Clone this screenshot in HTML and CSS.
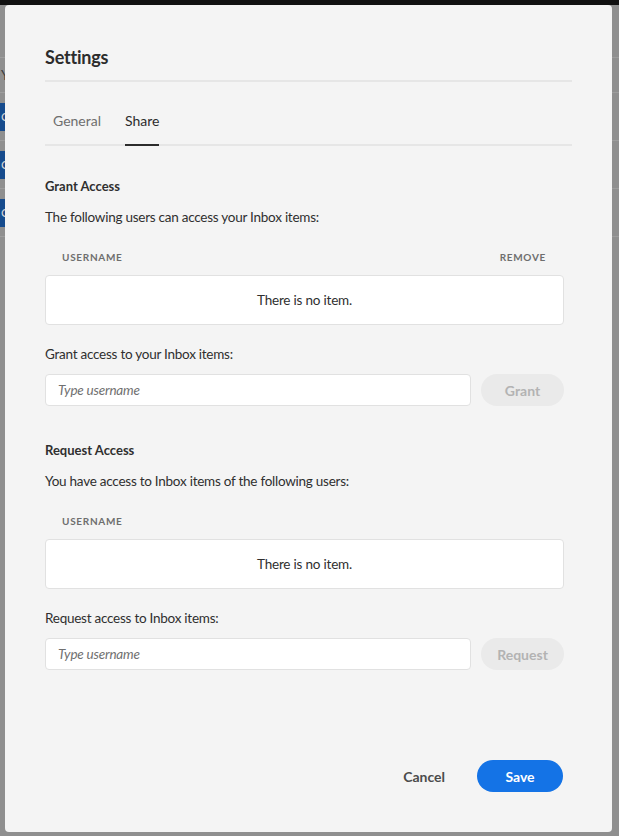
FILE: index.html
```html
<!DOCTYPE html>
<html lang="en">
<head>
<meta charset="utf-8">
<title>Settings</title>
<link rel="stylesheet" href="styles.css">
</head>
<body>
<div class="topbar"></div>
<div class="page">
  <div class="page-head"><span>Your Inbox</span></div>
  <div class="page-row"><span class="chip">Open</span></div>
  <div class="page-row"><span class="chip">Open</span></div>
  <div class="page-row"><span class="chip">Open</span></div>
</div>

<div class="dialog" role="dialog" aria-label="Settings">
  <h2 class="dialog-title">Settings</h2>
  <div class="tabs">
    <span class="tab">General</span>
    <span class="tab tab-active">Share</span>
  </div>

  <div class="dialog-body">
    <section class="section">
      <h3 class="section-title">Grant Access</h3>
      <p class="section-desc">The following users can access your Inbox items:</p>
      <div class="col-head"><span>Username</span><span>Remove</span></div>
      <div class="empty-box">There is no item.</div>
      <p class="field-label">Grant access to your Inbox items:</p>
      <div class="field-row">
        <input class="text-input" type="text" placeholder="Type username">
        <button class="pill-btn" disabled>Grant</button>
      </div>
    </section>

    <section class="section section-second">
      <h3 class="section-title">Request Access</h3>
      <p class="section-desc">You have access to Inbox items of the following users:</p>
      <div class="col-head"><span>Username</span></div>
      <div class="empty-box">There is no item.</div>
      <p class="field-label">Request access to Inbox items:</p>
      <div class="field-row">
        <input class="text-input" type="text" placeholder="Type username">
        <button class="pill-btn" disabled>Request</button>
      </div>
    </section>
  </div>

  <div class="dialog-footer">
    <button class="btn-quiet">Cancel</button>
    <button class="btn-primary">Save</button>
  </div>
</div>
</body>
</html>
```

FILE: styles.css
```css
html, body {
  margin: 0;
  padding: 0;
}

body {
  width: 619px;
  height: 836px;
  background: #8f8f8f;
  font-family: "Lato", "Open Sans", sans-serif;
  color: #2f2f2f;
  position: relative;
  overflow: hidden;
}

.topbar {
  height: 5px;
  background: #111111;
}

.page {
  padding-top: 52px;
}

.page-head {
  height: 34px;
  border-top: 1px solid #9d9d9d;
  border-bottom: 1px solid #9d9d9d;
  display: flex;
  align-items: center;
  font-size: 13px;
  color: #3a3a3a;
  padding-left: 1px;
}

.page-row {
  height: 47px;
  border-bottom: 1px solid #9d9d9d;
  display: flex;
  align-items: center;
}

.chip {
  display: flex;
  align-items: center;
  height: 28px;
  width: 40px;
  box-sizing: border-box;
  padding-left: 1px;
  background: #164b8d;
  color: #d8d8d8;
  font-size: 12px;
}

.dialog {
  position: absolute;
  left: 5px;
  top: 5px;
  width: 607px;
  height: 827px;
  box-sizing: border-box;
  padding: 40px;
  background: #f4f4f4;
  border-radius: 4px;
  display: flex;
  flex-direction: column;
}

.dialog-title {
  margin: 0;
  font-size: 18px;
  line-height: 24px;
  font-weight: 700;
  letter-spacing: -0.2px;
  color: #2c2c2c;
  padding-bottom: 11px;
  border-bottom: 2px solid #e6e6e6;
}

.tabs {
  margin-top: 18px;
  height: 44px;
  border-bottom: 2px solid #e6e6e6;
  display: flex;
  gap: 24px;
  padding-left: 8px;
}

.tab {
  position: relative;
  font-size: 14px;
  line-height: 42px;
  color: #6e6e6e;
}

.tab-active {
  color: #2c2c2c;
}

.tab-active::after {
  content: "";
  position: absolute;
  left: 0;
  right: 0;
  bottom: -2px;
  height: 2px;
  background: #2c2c2c;
}

.dialog-body {
  margin-right: 8px;
}

.section {
  margin-top: 31px;
}

.section-second {
  margin-top: 35px;
}

.section-title {
  margin: 0;
  font-size: 13px;
  line-height: 18px;
  font-weight: 700;
  color: #2f2f2f;
}

.section-desc {
  margin: 12px 0 0;
  font-size: 13.5px;
  line-height: 20px;
  letter-spacing: -0.25px;
}

.col-head {
  margin-top: 22px;
  display: flex;
  justify-content: space-between;
  padding: 0 18px 0 17px;
  font-size: 10px;
  line-height: 16px;
  font-weight: 700;
  text-transform: uppercase;
  letter-spacing: 0.07em;
  color: #6e6e6e;
}

.empty-box {
  margin-top: 10px;
  height: 50px;
  box-sizing: border-box;
  border: 1px solid #e1e1e1;
  border-radius: 4px;
  background: #ffffff;
  display: flex;
  align-items: center;
  justify-content: center;
  font-size: 13.5px;
  letter-spacing: -0.2px;
  color: #2f2f2f;
}

.field-label {
  margin: 19px 0 0;
  font-size: 13.5px;
  line-height: 20px;
  letter-spacing: -0.25px;
}

.field-row {
  margin-top: 10px;
  display: grid;
  grid-template-columns: 1fr 83px;
  gap: 10px;
}

.text-input {
  height: 32px;
  box-sizing: border-box;
  border: 1px solid #e1e1e1;
  border-radius: 4px;
  background: #ffffff;
  padding: 0 12px;
  font-family: inherit;
  font-size: 13.5px;
  letter-spacing: -0.2px;
  color: #2f2f2f;
  outline: none;
}

.text-input::placeholder {
  font-style: italic;
  color: #707070;
}

.pill-btn {
  height: 32px;
  border: none;
  border-radius: 16px;
  background: #eaeaea;
  color: #b3b3b3;
  font-family: inherit;
  font-size: 14px;
  font-weight: 700;
  padding: 0;
}

.dialog-footer {
  margin-top: auto;
  margin-right: 9px;
  display: flex;
  justify-content: flex-end;
  align-items: center;
  gap: 18px;
}

.btn-quiet {
  height: 32px;
  border: none;
  background: transparent;
  padding: 0 14px;
  font-family: inherit;
  font-size: 14px;
  font-weight: 700;
  color: #4b4b4b;
}

.btn-primary {
  height: 32px;
  min-width: 86px;
  border: none;
  border-radius: 16px;
  background: #1473e6;
  color: #ffffff;
  font-family: inherit;
  font-size: 14px;
  font-weight: 700;
  padding: 0 18px;
}
```
